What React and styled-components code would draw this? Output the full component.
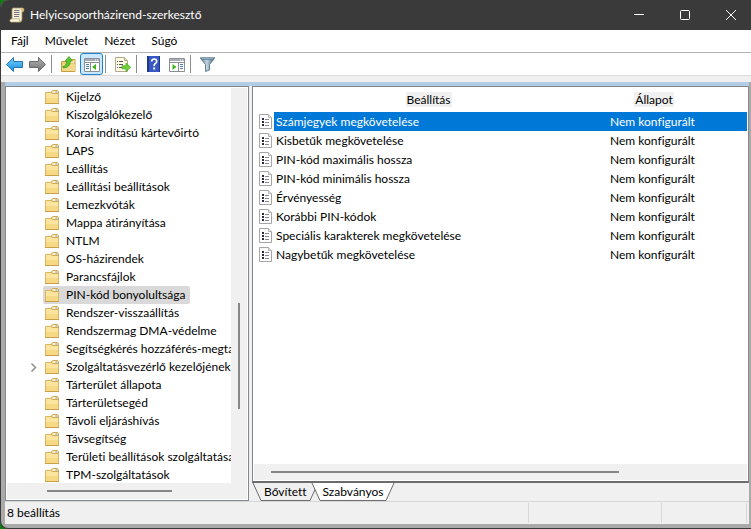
import React, { useState } from 'react'
import styled, { createGlobalStyle } from 'styled-components'

const GlobalStyle = createGlobalStyle`
  * {
    box-sizing: border-box;
  }

  body {
    margin: 0;
    background: #107c10;
    color: #000;
    font: 12px/18px Lato, "Open Sans", sans-serif;
    font-variant-ligatures: none;
  }

  button {
    padding: 0;
    border: 0;
    background: none;
    color: inherit;
    font: inherit;
    font-variant-ligatures: none;
  }

  svg {
    display: block;
    flex: none;
  }
`

const Window = styled.div`
  display: flex;
  flex-direction: column;
  height: 100vh;
  border-left: 1px solid #3a3a3a;
  border-bottom: 1px solid #3a3a3a;
  border-radius: 8px 0 0 8px;
  background: #aaaaaa;
  overflow: hidden;
`

const TitleBar = styled.header`
  display: flex;
  align-items: center;
  flex: none;
  height: 30px;
  padding-left: 8px;
  background: #3a3a3a;
  color: #fff;
`

const Title = styled.h1`
  flex: 1;
  margin: 0 0 0 5px;
  font-size: 12px;
  font-weight: 400;
`

const WindowButtons = styled.div`
  display: flex;
  gap: 5px;
`

const WindowButton = styled.button`
  display: flex;
  align-items: center;
  justify-content: center;
  width: 41px;
  height: 30px;

  &:hover {
    background: ${(props) => (props.$danger ? '#c42b1c' : '#4d4d4d')};
  }
`

const MenuBar = styled.nav`
  display: flex;
  flex: none;
  align-items: center;
  gap: 16px;
  height: 23px;
  padding-left: 10px;
  border-bottom: 1px solid #b4b4b4;
  background: #fff;
`

const ToolBar = styled.div`
  display: flex;
  flex: none;
  align-items: center;
  height: 23px;
  padding-left: 2px;
  border-bottom: 1px solid #dcdcdc;
  background: #fff;
`

const ToolButton = styled.button`
  display: flex;
  align-items: center;
  justify-content: center;
  width: 23px;
  height: 22px;
  border: 1px solid ${(props) => (props.$active ? '#1883d7' : 'transparent')};
  border-radius: 3px;
  background: ${(props) => (props.$active ? '#cce8ff' : 'none')};
`

const ToolSeparator = styled.span`
  width: 1px;
  height: 18px;
  margin: 0 5px 0 2px;
  background: #8d8d8d;
`

const ToolBarEdge = styled.div`
  flex: none;
  height: 6px;
  background: #f0f0f0;
`

const Client = styled.div`
  display: flex;
  flex: 1;
  flex-direction: column;
  min-height: 0;
  margin: 0 2px 4px 4px;
  background: #f0f0f0;
`

const Panes = styled.main`
  display: grid;
  flex: 1;
  grid-template-columns: 244px minmax(0, 1fr);
  gap: 3px;
  min-height: 0;
  border-top: 4px solid #b4cde6;
`

const TreePane = styled.section`
  display: grid;
  grid-template: minmax(0, 1fr) 16px / minmax(0, 1fr) 16px;
  min-height: 0;
  padding: 1px;
  border: 1px solid #828790;
  background: #fff;
`

const Tree = styled.ul`
  margin: 0;
  padding: 0;
  list-style: none;
  overflow: hidden;
`

const TreeItem = styled.li`
  display: flex;
  align-items: center;
  height: 18px;
  padding-left: 22px;
  white-space: nowrap;
`

const Expander = styled.span`
  flex: none;
  width: 14px;
`

const TreeLabel = styled.button`
  display: flex;
  align-items: center;
  gap: 7px;
  height: 18px;
  padding: 0 5px 0 2px;
  border-radius: 2px;
  background: ${(props) => (props.$selected ? '#d9d9d9' : 'none')};
  white-space: nowrap;
`

const VerticalBar = styled.div`
  display: flex;
  justify-content: center;
  padding-top: 215px;
  background: #f0f0f0;
`

const HorizontalBar = styled.div`
  display: flex;
  flex: none;
  align-items: center;
  grid-column: 1 / -1;
  height: 16px;
  padding-left: ${(props) => props.$start};
  background: #f0f0f0;
`

const Thumb = styled.span`
  width: ${(props) => props.$width || '2px'};
  height: ${(props) => props.$height || '2px'};
  background: #868686;
`

const ListPane = styled.section`
  display: flex;
  flex-direction: column;
  min-width: 0;
  min-height: 0;
`

const ListFrame = styled.div`
  display: flex;
  flex: 1;
  flex-direction: column;
  min-height: 0;
  padding: 0 1px 1px;
  border: 1px solid #828790;
  border-bottom: 2px solid #6d6a70;
  background: #fff;
`

const ListArea = styled.div`
  flex: 1;
  min-height: 0;
  overflow: hidden;
`

const SettingsTable = styled.table`
  width: 100%;
  border-collapse: collapse;
  table-layout: fixed;

  th {
    height: 25px;
    padding: 0;
    font-weight: 400;
  }

  td {
    height: 19px;
    padding: 0;
    line-height: 19px;
    white-space: nowrap;
  }
`

const Column = styled.col`
  width: ${(props) => props.$width};
`

const HeadLabel = styled.span`
  display: inline-block;
  padding: 0 1px;
  background: #f0f0f0;
  line-height: 15px;
`

const IconCell = styled.td`
  svg {
    margin-left: 5px;
  }
`

const Cell = styled.td`
  && {
    padding-left: ${(props) => props.$indent};
  }
  background: ${(props) => (props.$selected ? '#0078d7' : 'none')};
  color: ${(props) => (props.$selected ? '#fff' : 'inherit')};
`

const Tabs = styled.div`
  display: flex;
  flex: none;
  height: 18px;
`

const Tab = styled.button`
  display: flex;
  height: 18px;
  margin-right: -8px;
  line-height: 18px;
`

const TabText = styled.span`
  height: 18px;
  padding: 0 2px;
  border-bottom: 1px solid #6d6a70;
  background: ${(props) => (props.$active ? '#fff' : '#f0f0f0')};
`

const StatusBar = styled.footer`
  display: flex;
  flex: none;
  height: 23px;
  padding: 0 2px 1px 0;
  border-top: 1px solid #d7d7d7;
`

const StatusCell = styled.div`
  flex: ${(props) => (props.$width ? 'none' : '1')};
  width: ${(props) => props.$width || 'auto'};
  margin-top: 1px;
  padding: 1px 0 0 2px;
  border-right: 1px solid #d7d7d7;
`

const ScrollIcon = () => (
  <svg width="16" height="16" viewBox="0 0 16 16">
    <path d="M4 1h9.500q1.500 0 1.500 2t-2 2v7q0 3-2 3H2.500Q1 15 1 13.500T3 12V3q0-2 1-2z" fill="#f3ecd2" stroke="#a3935f" strokeWidth=".8" />
    <path d="M3 12h7.500q-.5 3 1 3H2.500Q1 15 1 13.500T3 12z" fill="#fffbe8" stroke="#a3935f" strokeWidth=".6" />
    <path d="M12 1.500h1.500Q15 2 14.500 4L12.500 4.500z" fill="#d9b765" />
    <path d="M5 3.500h5.500M5 5.500h5.500M5 7.500h5.500M5 9.500h5" stroke="#77788a" />
  </svg>
)

const MinimizeIcon = () => (
  <svg width="10" height="10" viewBox="0 0 10 10">
    <path d="M0 4.500h10" stroke="#fff" />
  </svg>
)

const MaximizeIcon = () => (
  <svg width="10" height="10" viewBox="0 0 10 10">
    <rect x=".5" y=".5" width="9" height="9" rx="1" fill="none" stroke="#fff" />
  </svg>
)

const CloseIcon = () => (
  <svg width="10" height="10" viewBox="0 0 10 10">
    <path d="M0 0l10 10M10 0L0 10" stroke="#fff" />
  </svg>
)

const ArrowIcon = ({ forward }) => (
  <svg width="17" height="16" viewBox="0 0 17 16">
    <defs>
      <linearGradient id={forward ? 'grayArrow' : 'blueArrow'} x1="0" y1="0" x2="0" y2="1">
        <stop offset="0" stopColor={forward ? '#b5b5b5' : '#7fd4fb'} />
        <stop offset="1" stopColor={forward ? '#6f6f6f' : '#128be0'} />
      </linearGradient>
    </defs>
    <path
      d={forward ? 'M16.500 8.500L9.500 1.500V5.500H.5v6h9v4z' : 'M.5 8.500L7.500 1.500V5.500H16.500v6h-9v4z'}
      fill={forward ? 'url(#grayArrow)' : 'url(#blueArrow)'}
      stroke={forward ? '#6a6a6a' : '#2377b4'}
      strokeLinejoin="round"
    />
  </svg>
)

const UpFolderIcon = () => (
  <svg width="15" height="16" viewBox="0 0 15 16">
    <path d="M.5 5.500h6l1.500-2h6v12H.5z" fill="#e9cc7c" stroke="#c79f42" />
    <path d="M8.500 4.500h5v2h-5z" fill="#fff3c4" />
    <path d="M1 8h13v7H1z" fill="#f3d98b" />
    <path d="M1.500 10.500Q5.500 10 6 5H4l4-4.500L11.500 5h-2Q9 11.500 2.500 12z" fill="#5bc62c" stroke="#3a9a1a" strokeWidth=".7" />
  </svg>
)

const PaneIcon = ({ right }) => (
  <svg width="16" height="16" viewBox="0 0 16 16">
    <path d="M.5 2.500h15v13H.5z" fill="#fff" stroke="#8a8f97" />
    <path d="M1 3h14v2H1z" fill="#a7acb3" />
    <path d="M11 4h1M13 4h1" stroke="#fff" />
    <path d="M1 6.500h14" stroke="#8a8f97" />
    {right ? (
      <>
        <path d="M9.500 7v8" stroke="#8a8f97" />
        <path d="M11 8.500h3M11 10.500h3M11 12.500h3" stroke="#4d7fae" />
        <path d="M3.500 8v6L7.500 11z" fill="#3fb618" />
      </>
    ) : (
      <>
        <path d="M6.500 7v8" stroke="#8a8f97" />
        <path d="M2 8.500h3M2 10.500h3M2 12.500h3" stroke="#4d7fae" />
        <path d="M12 8v6L8 11z" fill="#3fb618" />
      </>
    )}
  </svg>
)

const ExportIcon = () => (
  <svg width="16" height="15" viewBox="0 0 16 15">
    <path d="M.5.5h9l3 3v11H.5z" fill="#fffbe6" stroke="#b3a988" />
    <path d="M9.500.5v3h3" fill="#e5dcbb" stroke="#b3a988" />
    <path d="M2 4.500h1M2 7.500h1M2 10.500h1M4 4.500h4M4 7.500h4M4 10.500h3" stroke="#55595f" />
    <path d="M7 8.700h4V6l4.700 4.200L11 14.500v-2.700H7z" fill="#6fd23c" stroke="#45a81e" strokeWidth=".7" />
  </svg>
)

const HelpIcon = () => (
  <svg width="13" height="16" viewBox="0 0 13 16">
    <path d="M0 0h13v16H0z" fill="#3658c0" />
    <path d="M0 0h2v16H0z" fill="#20378e" />
    <path d="M12.500 0v16" stroke="#20378e" />
    <path d="M4.700 5.500Q4.700 3 7.200 3t2.500 2.300Q9.700 6.800 8.300 7.600T7.200 10.200" fill="none" stroke="#fff" strokeWidth="1.700" />
    <path d="M6.200 11.500h2v2h-2z" fill="#fff" />
  </svg>
)

const FilterIcon = () => (
  <svg width="15" height="16" viewBox="0 0 15 16">
    <defs>
      <linearGradient id="funnel">
        <stop offset="0" stopColor="#5f7f98" />
        <stop offset=".45" stopColor="#c3d5e2" />
        <stop offset="1" stopColor="#3f607c" />
      </linearGradient>
    </defs>
    <path d="M.5 2.500h14L9.500 8.500v5.500l-4 1.500V8.500z" fill="url(#funnel)" stroke="#4d6a81" strokeWidth=".8" />
    <path d="M.5 1.500h14L13 3.500H2z" fill="#8eabc0" stroke="#5c788f" strokeWidth=".6" />
  </svg>
)

const FolderIcon = () => (
  <svg width="14" height="14" viewBox="0 0 14 14">
    <path d="M.5 2.500h13v11H.5z" fill="#fbe3a0" stroke="#dcb65f" />
    <path d="M1 8h12v5H1z" fill="#f7d985" />
    <path d="M6.500 3V1.500l1-1h5l1 1V3.500h-6z" fill="#f3dc94" stroke="#cfa956" />
    <path d="M8 2h4" stroke="#fff" />
    <path d="M10.500 2H12" stroke="#5a9bd5" />
    <path d="M0 13.500h14" stroke="#c9a04a" />
  </svg>
)

const ExpandIcon = () => (
  <svg width="14" height="10" viewBox="0 0 14 10">
    <path d="M2.500 1.500L6.500 5.500l-4 4" fill="none" stroke="#949494" strokeWidth="1.600" />
  </svg>
)

const SettingIcon = () => (
  <svg width="13" height="15" viewBox="0 0 13 15">
    <path d="M.5.5h9l3 3v11H.5z" fill="#fff" stroke="#a5a5a5" />
    <path d="M9.500.5v3h3" fill="#e8e8e8" stroke="#b5b5b5" />
    <path d="M3 4h2v2H3zM3 7h2v2H3zM3 10h2v2H3z" fill="#2a2a3a" />
    <path d="M6 5.500h4M6 8.500h4M6 11.500h4" stroke="#8585a0" />
  </svg>
)

const TabEdge = ({ active, end }) => (
  <svg width="10" height="18" viewBox="0 0 10 18">
    <path d={end ? 'M0 0h9L1 17.500H0z' : 'M1 0h9v17.500H9z'} fill={active ? '#fff' : '#f0f0f0'} />
    <path d={end ? 'M9 0L1 17.500H0' : 'M1 0l8 17.500h1'} fill="none" stroke="#6d6a70" />
  </svg>
)

const menus = ['Fájl', 'Művelet', 'Nézet', 'Súgó']

const folders = [
  'Kijelző',
  'Kiszolgálókezelő',
  'Korai indítású kártevőirtó',
  'LAPS',
  'Leállítás',
  'Leállítási beállítások',
  'Lemezkvóták',
  'Mappa átirányítása',
  'NTLM',
  'OS-házirendek',
  'Parancsfájlok',
  'PIN-kód bonyolultsága',
  'Rendszer-visszaállítás',
  'Rendszermag DMA-védelme',
  'Segítségkérés hozzáférés-megta',
  'Szolgáltatásvezérlő kezelőjének',
  'Tárterület állapota',
  'Tárterületsegéd',
  'Távoli eljáráshívás',
  'Távsegítség',
  'Területi beállítások szolgáltatása',
  'TPM-szolgáltatások'
]

const expandable = 'Szolgáltatásvezérlő kezelőjének'

const settings = [
  'Számjegyek megkövetelése',
  'Kisbetűk megkövetelése',
  'PIN-kód maximális hossza',
  'PIN-kód minimális hossza',
  'Érvényesség',
  'Korábbi PIN-kódok',
  'Speciális karakterek megkövetelése',
  'Nagybetűk megkövetelése'
]

const App = () => {
  const [folder, setFolder] = useState('PIN-kód bonyolultsága')
  const [setting, setSetting] = useState(settings[0])

  return (
    <>
      <GlobalStyle />
      <Window>
        <TitleBar>
          <ScrollIcon />
          <Title>Helyicsoportházirend-szerkesztő</Title>
          <WindowButtons>
            <WindowButton aria-label="Kis méret"><MinimizeIcon /></WindowButton>
            <WindowButton aria-label="Teljes méret"><MaximizeIcon /></WindowButton>
            <WindowButton aria-label="Bezárás" $danger><CloseIcon /></WindowButton>
          </WindowButtons>
        </TitleBar>
        <MenuBar>
          {menus.map((menu) => <button key={menu}>{menu}</button>)}
        </MenuBar>
        <ToolBar>
          <ToolButton aria-label="Vissza"><ArrowIcon /></ToolButton>
          <ToolButton aria-label="Előre"><ArrowIcon forward /></ToolButton>
          <ToolSeparator />
          <ToolButton aria-label="Egy szinttel feljebb"><UpFolderIcon /></ToolButton>
          <ToolButton aria-label="Konzolfa" $active><PaneIcon /></ToolButton>
          <ToolSeparator />
          <ToolButton aria-label="Lista exportálása"><ExportIcon /></ToolButton>
          <ToolSeparator />
          <ToolButton aria-label="Súgó"><HelpIcon /></ToolButton>
          <ToolButton aria-label="Műveletpanel"><PaneIcon right /></ToolButton>
          <ToolSeparator />
          <ToolButton aria-label="Szűrő"><FilterIcon /></ToolButton>
        </ToolBar>
        <ToolBarEdge />
        <Client>
          <Panes>
            <TreePane>
              <Tree>
                {folders.map((name) => (
                  <TreeItem key={name}>
                    <Expander>{name === expandable && <ExpandIcon />}</Expander>
                    <TreeLabel $selected={name === folder} onClick={() => setFolder(name)}>
                      <FolderIcon />
                      {name}
                    </TreeLabel>
                  </TreeItem>
                ))}
              </Tree>
              <VerticalBar><Thumb $height="106px" /></VerticalBar>
              <HorizontalBar $start="40px"><Thumb $width="125px" /></HorizontalBar>
            </TreePane>
            <ListPane>
              <ListFrame>
                <ListArea>
                  <SettingsTable>
                    <colgroup>
                      <Column $width="20px" />
                      <Column $width="329px" />
                      <Column $width="102px" />
                      <Column />
                    </colgroup>
                    <thead>
                      <tr>
                        <th colSpan="2"><HeadLabel>Beállítás</HeadLabel></th>
                        <th><HeadLabel>Állapot</HeadLabel></th>
                        <th />
                      </tr>
                    </thead>
                    <tbody>
                      {settings.map((name) => (
                        <tr key={name} onClick={() => setSetting(name)}>
                          <IconCell><SettingIcon /></IconCell>
                          <Cell $indent="2px" $selected={name === setting}>{name}</Cell>
                          <Cell $indent="7px" $selected={name === setting}>Nem konfigurált</Cell>
                          <Cell $selected={name === setting} />
                        </tr>
                      ))}
                    </tbody>
                  </SettingsTable>
                </ListArea>
                <HorizontalBar $start="17px"><Thumb $width="348px" /></HorizontalBar>
              </ListFrame>
              <Tabs>
                <Tab>
                  <TabEdge />
                  <TabText>Bővített</TabText>
                  <TabEdge end />
                </Tab>
                <Tab>
                  <TabEdge active />
                  <TabText $active>Szabványos</TabText>
                  <TabEdge active end />
                </Tab>
              </Tabs>
            </ListPane>
          </Panes>
          <StatusBar>
            <StatusCell>8 beállítás</StatusCell>
            <StatusCell $width="133px" />
            <StatusCell $width="85px" />
          </StatusBar>
        </Client>
      </Window>
    </>
  )
}

export default App
